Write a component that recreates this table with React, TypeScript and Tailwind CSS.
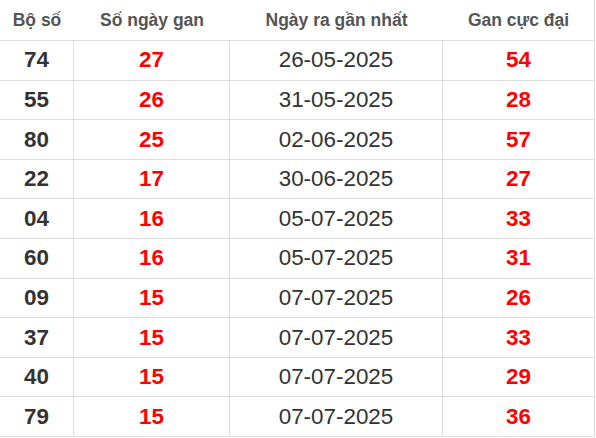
const rows: [string, string, string, string][] = [
  ["74", "27", "26-05-2025", "54"],
  ["55", "26", "31-05-2025", "28"],
  ["80", "25", "02-06-2025", "57"],
  ["22", "17", "30-06-2025", "27"],
  ["04", "16", "05-07-2025", "33"],
  ["60", "16", "05-07-2025", "31"],
  ["09", "15", "07-07-2025", "26"],
  ["37", "15", "07-07-2025", "33"],
  ["40", "15", "07-07-2025", "29"],
  ["79", "15", "07-07-2025", "36"],
];

export default function App() {
  return (
    <div className="min-h-screen bg-white font-['Liberation_Sans',Arial,sans-serif]">
      <div className="w-[595px] border-r border-[#dedede]">
        <div className="flex h-[41px] items-center border-b border-[#dedede] text-[17.5px] font-bold text-[#555]">
          <div className="w-[74px] text-center">Bộ số</div>
          <div className="w-[156px] text-center">Số ngày gan</div>
          <div className="w-[213px] text-center">Ngày ra gần nhất</div>
          <div className="flex-1 text-center">Gan cực đại</div>
        </div>
        {rows.map(([num, days, date, max]) => (
          <div key={num} className="flex h-[39.6px] border-b border-[#dedede] text-[22.4px]">
            <div className="flex w-[74px] items-center justify-center border-r border-[#dedede] font-bold text-[#333]">
              {num}
            </div>
            <div className="flex w-[156px] items-center justify-center border-r border-[#dedede] font-bold text-[#ff0000]">
              {days}
            </div>
            <div className="flex w-[213px] items-center justify-center border-r border-[#dedede] text-[#333]">
              {date}
            </div>
            <div className="flex flex-1 items-center justify-center font-bold text-[#ff0000]">{max}</div>
          </div>
        ))}
      </div>
    </div>
  );
}
